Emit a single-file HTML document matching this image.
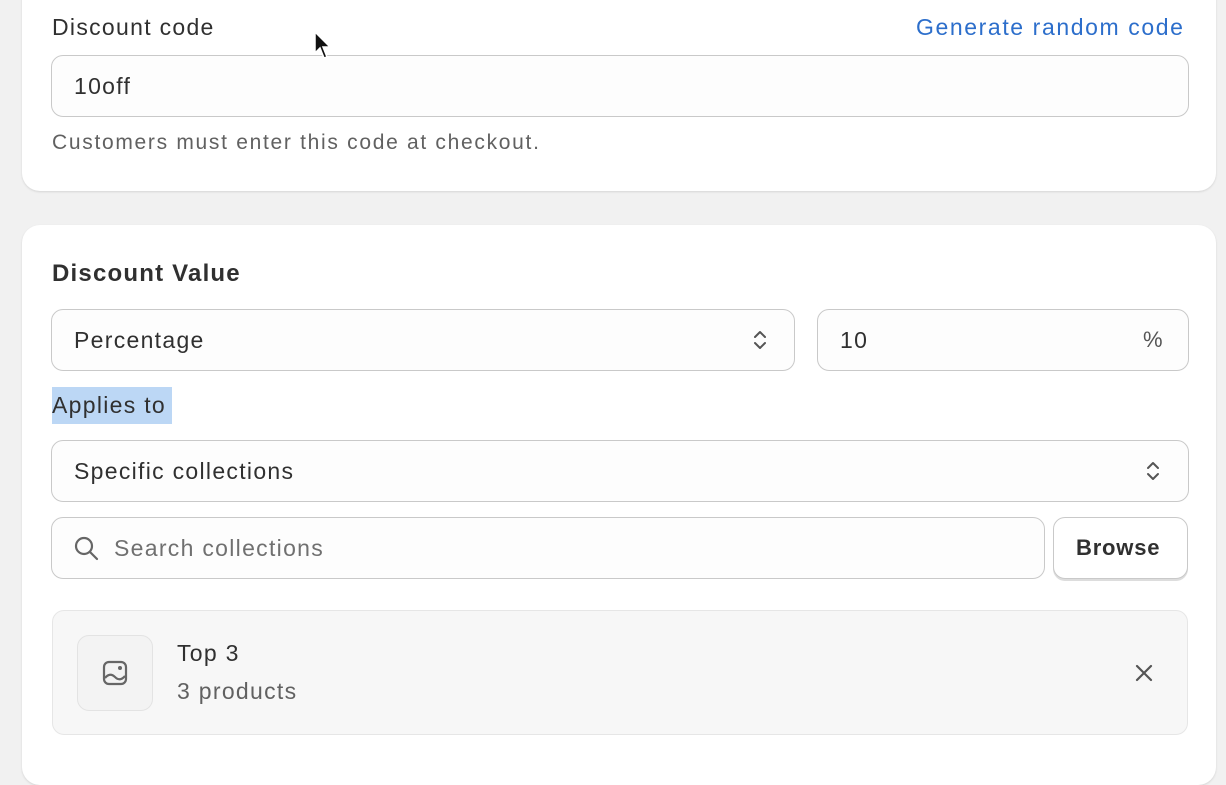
<!DOCTYPE html>
<html><head><style>
body{margin:0;width:1226px;height:748px;background:#f1f1f1;font-family:"Liberation Sans",sans-serif;color:#303030;position:relative;overflow:hidden;letter-spacing:1.3px}
.card{position:absolute;left:22px;width:1194px;background:#fff;border-radius:18px;box-shadow:0 1px 2px rgba(0,0,0,.12)}
.abs{position:absolute}
.inp{position:absolute;border:1.5px solid #c9c9c9;border-radius:12px;background:#fdfdfd;box-sizing:border-box;font-size:23px;display:flex;align-items:center;padding-left:22px}
</style></head><body>
<div class="card" style="top:-20px;height:211px"></div>
<div class="abs" style="left:52px;top:14px;font-size:23px">Discount code</div>
<div class="abs" style="left:916px;top:14px;font-size:23px;color:#2c6ecb;letter-spacing:1.6px">Generate random code</div>
<div class="inp" style="left:51px;top:55px;width:1138px;height:62px">10off</div>
<div class="abs" style="left:52px;top:131px;font-size:21px;color:#616161;letter-spacing:1.7px">Customers must enter this code at checkout.</div>
<svg class="abs" style="left:313px;top:31px" width="20" height="30" viewBox="0 0 20 30"><path d="M2 1 L2 22 L7 17 L11 27 L14 26 L10 16 L17 16 Z" fill="#111" stroke="#fff" stroke-width="1.5"/></svg>

<div class="card" style="top:225px;height:560px"></div>
<div class="abs" style="left:52px;top:260px;font-size:24px;font-weight:bold;letter-spacing:1.2px">Discount Value</div>
<div class="inp" style="left:51px;top:309px;width:744px;height:62px">Percentage</div>
<svg class="abs" style="left:750px;top:328px" width="20" height="24" viewBox="0 0 20 24"><path d="M5 9 L10 4 L15 9 M5 15 L10 20 L15 15" fill="none" stroke="#555" stroke-width="2" stroke-linecap="round" stroke-linejoin="round"/></svg>
<div class="inp" style="left:817px;top:309px;width:372px;height:62px">10</div>
<div class="abs" style="left:1143px;top:327px;font-size:22px;color:#555">%</div>
<div class="abs" style="left:52px;top:387px;height:37px;width:120px;background:#bcd7f5"></div>
<div class="abs" style="left:52px;top:392px;font-size:23px">Applies to</div>
<div class="inp" style="left:51px;top:440px;width:1138px;height:62px">Specific collections</div>
<svg class="abs" style="left:1143px;top:459px" width="20" height="24" viewBox="0 0 20 24"><path d="M5 9 L10 4 L15 9 M5 15 L10 20 L15 15" fill="none" stroke="#555" stroke-width="2" stroke-linecap="round" stroke-linejoin="round"/></svg>
<div class="inp" style="left:51px;top:517px;width:994px;height:62px;padding-left:62px;color:#707070">Search collections</div>
<svg class="abs" style="left:72px;top:534px" width="28" height="28" viewBox="0 0 28 28"><circle cx="12" cy="12" r="8" fill="none" stroke="#666" stroke-width="2.2"/><path d="M18 18 L25 25" stroke="#666" stroke-width="2.2" stroke-linecap="round"/></svg>
<div class="inp" style="left:1053px;top:517px;width:135px;height:62px;padding-left:22px;background:#fff;font-weight:bold;font-size:22px;letter-spacing:0.8px;box-shadow:0 2px 0 #ddd">Browse</div>
<div class="abs" style="left:52px;top:610px;width:1136px;height:125px;border:1.5px solid #e6e6e6;border-radius:12px;background:#f7f7f7;box-sizing:border-box"></div>
<div class="abs" style="left:77px;top:635px;width:76px;height:76px;border:1.5px solid #e3e3e3;border-radius:12px;background:#f3f3f3;box-sizing:border-box"></div>
<svg class="abs" style="left:101px;top:659px" width="28" height="28" viewBox="0 0 28 28"><rect x="3" y="3" width="22" height="22" rx="5" fill="none" stroke="#666" stroke-width="2.2"/><path d="M4 19 Q9 13 14 18 T24 17" fill="none" stroke="#666" stroke-width="2.2"/><circle cx="19" cy="9" r="2" fill="#666"/></svg>
<div class="abs" style="left:177px;top:640px;font-size:23px">Top 3</div>
<div class="abs" style="left:177px;top:678px;font-size:23px;color:#616161">3 products</div>
<svg class="abs" style="left:1134px;top:663px" width="20" height="20" viewBox="0 0 20 20"><path d="M3 3 L17 17 M17 3 L3 17" stroke="#555" stroke-width="2.2" stroke-linecap="round"/></svg>
</body></html>
